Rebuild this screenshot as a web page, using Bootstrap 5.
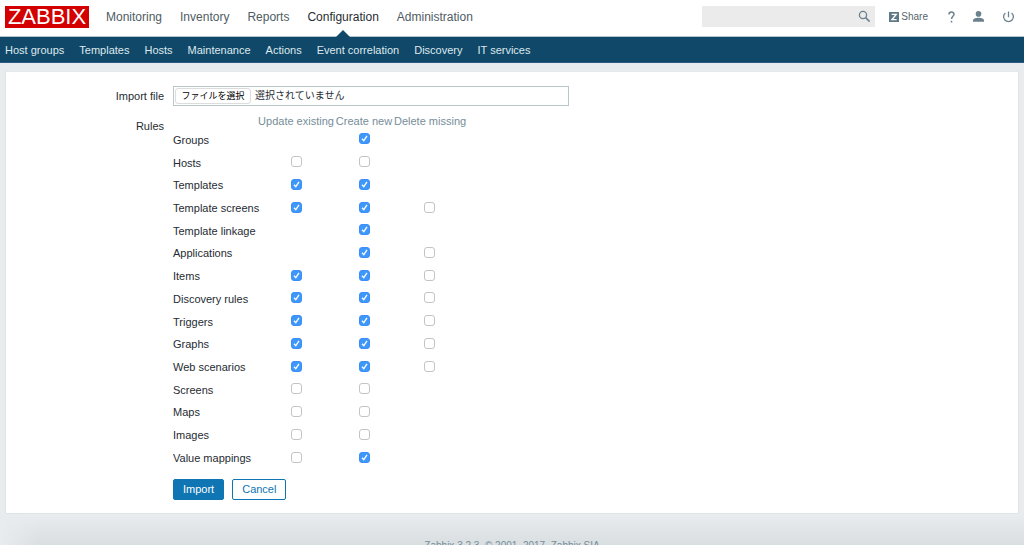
<!DOCTYPE html>
<html lang="en">
<head>
<meta charset="utf-8">
<meta name="viewport" content="width=device-width, initial-scale=1">
<title>Configuration import</title>
<link href="https://cdn.jsdelivr.net/npm/bootstrap@5.3.0/dist/css/bootstrap.min.css" rel="stylesheet">
<style>
  body { font: 11px/16px "Liberation Sans", "Noto Sans CJK JP", Arial, sans-serif; color: #1f2c33; background: #e8ecef; }
  .page-shell { position: relative; }
  .topbar { height: 37px; border-bottom: 1px solid #b4c3cd; padding: 0 9px 3px 5px; background: #fff; }
  .brand { width: 84px; height: 22px; margin-right: 17px; background: #d40000; color: #fff; font-size: 22px; line-height: 22px; text-align: center; text-decoration: none; }
  .main-menu { gap: 18px; font-size: 12px; }
  .main-menu a { color: #4f5c63; text-decoration: none; position: relative; }
  .main-menu a.active { color: #1f2c33; }
  .main-menu a.active::after { content: ""; position: absolute; left: 50%; top: 21px; margin-left: -7px; border: 7px solid transparent; border-top: 0; border-bottom-color: #0f4868; }
  .sub-menu { height: 26px; gap: 15px; padding: 0 5px; background: #0f4868; border-bottom: 1px solid #2a5b80; }
  .sub-menu a { color: #dfe8ee; text-decoration: none; }
  .search-box { width: 173px; height: 21px; background: #ebebeb; }
  .search-box input { min-width: 0; background: none; border: 0; outline: 0; }
  .search-box button { border: 0; background: none; padding: 0 4px 0 0; line-height: 0; }
  .tool-links { gap: 18px; }
  .tool-links a { color: #6b818e; text-decoration: none; line-height: 0; }
  .tool-links a.share { font-size: 10px; line-height: 16px; color: #56656d; gap: 2px; margin: 0 2px 0 14px; }
  .panel { margin: 8px 5px 0; padding: 14px 0 13px; background: #fff; border: 1px solid #dfe4e7; border-top-color: #e4e9ec; }
  .form-label-col { width: 158px; text-align: right; margin-right: 9px; flex: none; }
  .file-field { width: 396px; height: 20px; border: 1px solid #b9c7cc; font-size: 10px; position: relative; }
  .file-field input { position: absolute; inset: 0; width: 100%; opacity: 0; }
  .file-pick { height: 16px; width: 76px; margin: 0 4px 0 1px; border: 1px solid #dcdcdc; border-radius: 3px; font-size: 9px; line-height: 14px; text-align: center; color: #000; }
  .rules-grid { table-layout: fixed; width: 292px; height: 355px; margin-bottom: 2px; white-space: nowrap; }
  .rules-grid th { font-weight: 400; padding: 0; }
  .rules-grid td { padding: 0 0 1px; text-align: center; }
  .rules-grid thead tr { height: 14px; line-height: 14px; }
  .rules-grid thead th { text-align: center; color: #768d99; }
  .rules-grid tbody th { padding-top: 1px; }
  .rules-grid .col-name { width: 85px; }
  .rules-grid .col-update { width: 76px; }
  .rules-grid .col-create { width: 60px; }
  .tick { appearance: none; display: block; width: 11px; height: 11px; margin: 0 auto; border: 1px solid #c4c4c4; border-radius: 3px; background: #fff; }
  .tick:checked { border-color: #3b8ff5; background: #3e97fa url("data:image/svg+xml,%3Csvg xmlns='http://www.w3.org/2000/svg' viewBox='0 0 9 9'%3E%3Cpath d='M2 4.8 3.8 6.7 7 1.9' fill='none' stroke='white' stroke-width='1.3'/%3E%3C/svg%3E") center/9px no-repeat; }
  .btn-form { height: 21px; padding: 0 9px; font-size: 11px; line-height: 19px; border-radius: 2px; border: 1px solid #0f75b3; color: #0f75b3; background: #fff; }
  .btn-form.btn-fill { background: #0f75b3; color: #fff; }
  .page-foot { margin-top: 24px; color: #768d99; font-size: 10px; line-height: 16px; text-align: center; }
  .bottom-shade { position: absolute; left: 0; right: 0; bottom: 0; height: 30px; pointer-events: none; background: linear-gradient(90deg, #e8ecef, transparent 40px), linear-gradient(#e8ecef, #d9dee1); }
  .page-foot span { position: relative; z-index: 1; }
</style>
</head>
<body>
<div class="page-shell vh-100 overflow-hidden">
  <header>
    <div class="topbar d-flex align-items-center">
      <a class="brand flex-shrink-0" href="#">ZABBIX</a>
      <nav class="main-menu d-flex me-auto" aria-label="Main">
        <a href="#">Monitoring</a><a href="#">Inventory</a><a href="#">Reports</a><a href="#" class="active">Configuration</a><a href="#">Administration</a>
      </nav>
      <form class="search-box d-flex align-items-center">
        <input type="search" class="flex-grow-1" aria-label="Search">
        <button type="button" aria-label="Search"><svg width="13" height="13" viewBox="0 0 13 13" fill="none" stroke="#6b818e"><circle cx="5" cy="5" r="3.6" stroke-width="1.3"/><path d="m7.6 7.6 4 4" stroke-width="1.6"/></svg></button>
      </form>
      <div class="tool-links d-flex align-items-center">
        <a class="share d-flex align-items-center" href="#"><svg width="10" height="10" viewBox="0 0 10 10"><path fill="#5f7885" d="M0 0h10v10H0z"/><path d="M2.6 2.4h4.6L3 7.6h4.6" fill="none" stroke="#fff" stroke-width="1.4"/></svg>Share</a>
        <a href="#" aria-label="Help"><svg width="7" height="12" viewBox="0 0 7 12" fill="none" stroke="currentColor" stroke-width="1.5"><path d="M1 3.5C1 .2 6 .2 6 3.3c0 2-2.5 2-2.5 4.8M3.5 9.7v1.7"/></svg></a>
        <a href="#" aria-label="Profile"><svg width="11" height="11" viewBox="0 0 11 11" fill="currentColor"><circle cx="5.5" cy="2.9" r="2.8"/><path d="M0 10.7V9.3C0 7.7 3 6.8 5.5 6.8S11 7.7 11 9.3v1.4z"/></svg></a>
        <a href="#" aria-label="Sign out"><svg width="13" height="12" viewBox="0 0 13 12" fill="none" stroke="currentColor" stroke-width="1.3"><path d="M6.5 .5v5.8M3.4 1.9a4.9 4.9 0 1 0 6.2 0"/></svg></a>
      </div>
    </div>
    <nav class="sub-menu d-flex align-items-center" aria-label="Configuration">
      <a href="#">Host groups</a><a href="#">Templates</a><a href="#">Hosts</a><a href="#">Maintenance</a><a href="#">Actions</a><a href="#">Event correlation</a><a href="#">Discovery</a><a href="#">IT services</a>
    </nav>
  </header>
  <main>
    <form class="panel">
      <div class="d-flex align-items-center">
        <label class="form-label-col" for="import-file">Import file</label>
        <div class="file-field d-flex align-items-center" lang="ja">
          <label class="file-pick" for="import-file">ファイルを選択</label><span>選択されていません</span>
          <input type="file" id="import-file">
        </div>
      </div>
      <div class="d-flex mt-2">
        <div class="form-label-col pt-1">Rules</div>
        <table class="rules-grid">
          <thead><tr><th class="col-name"></th><th class="col-update" scope="col">Update existing</th><th class="col-create" scope="col">Create new</th><th scope="col">Delete missing</th></tr></thead>
          <tbody id="rule-rows"></tbody>
        </table>
      </div>
      <div class="d-flex mt-2">
        <div class="form-label-col"></div>
        <button type="button" class="btn-form btn-fill me-2">Import</button>
        <button type="button" class="btn-form">Cancel</button>
      </div>
    </form>
  </main>
  <div class="bottom-shade"></div>
  <footer class="page-foot"><span>Zabbix 3.2.3. © 2001–2017, Zabbix SIA</span></footer>
</div>
<script>
  // Each rule: name, then update / create / delete (1 ticked, 0 empty, - not offered)
  const rules = [['Groups','-1-'],['Hosts','00-'],['Templates','11-'],['Template screens','110'],['Template linkage','-1-'],['Applications','-10'],['Items','110'],['Discovery rules','110'],['Triggers','110'],['Graphs','110'],['Web scenarios','110'],['Screens','00-'],['Maps','00-'],['Images','00-'],['Value mappings','01-']];
  const actions = ['Update existing', 'Create new', 'Delete missing'];
  document.getElementById('rule-rows').innerHTML = rules.map(([name, flags]) =>
    `<tr><th scope="row">${name}</th>${[...flags].map((f, i) =>
      `<td>${f === '-' ? '' : `<input type="checkbox" class="tick" aria-label="${name}: ${actions[i]}"${f === '1' ? ' checked' : ''}>`}</td>`).join('')}</tr>`).join('');
</script>
<script src="https://cdn.jsdelivr.net/npm/bootstrap@5.3.0/dist/js/bootstrap.bundle.min.js"></script>
</body>
</html>
